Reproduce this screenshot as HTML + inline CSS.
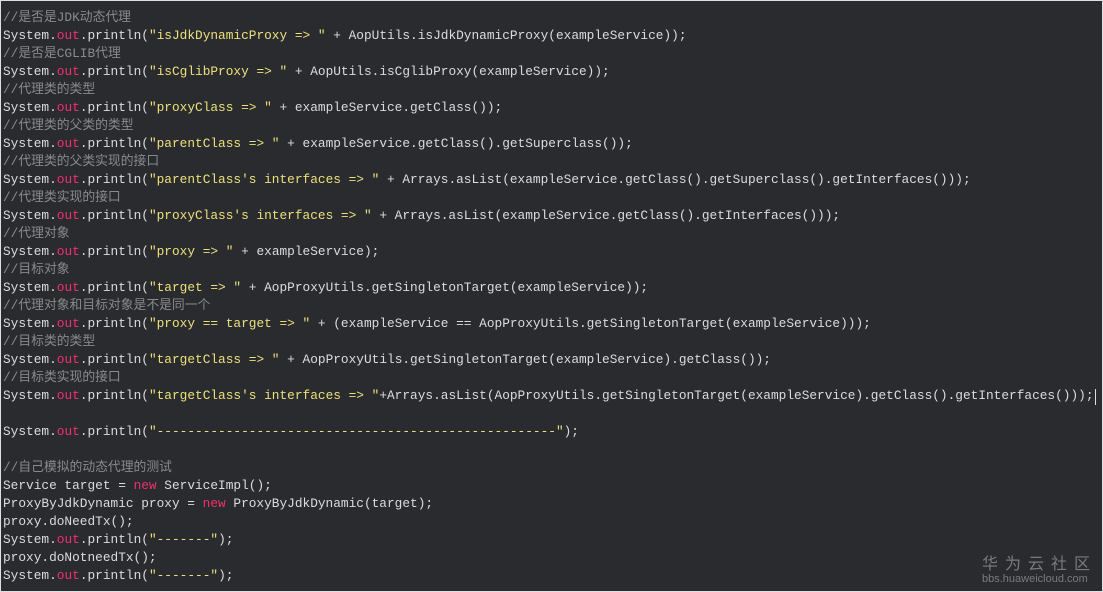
<!DOCTYPE html>
<html><head><meta charset="utf-8"><style>
html,body{margin:0;padding:0;}
body{width:1103px;height:592px;background:#fff;overflow:hidden;}
#c{position:absolute;left:0;top:0;width:1101px;height:590px;background:#2a2b2f;border:1px solid #e0e0e0;}
pre{margin:0;position:absolute;left:2px;top:8px;font-family:"Liberation Mono","Noto Sans CJK SC",monospace;font-size:12.8px;line-height:18px;color:#dcdcdc;}
.c{color:#8a8a8a;}
.s{color:#ece07a;}
.o{color:#f0306a;}
.k{color:#f0306a;}
#wm{position:absolute;left:981px;top:551px;color:#7a7b7e;font-family:"Noto Sans CJK SC",sans-serif;}
#wm .a{font-size:16px;letter-spacing:7px;line-height:20px;}
#wm .b{font-size:11px;font-family:"Liberation Sans",sans-serif;line-height:14px;}
#cur{position:absolute;left:1094px;top:388px;width:1px;height:16px;background:#ddd;}
</style></head><body><div id="c">
<pre><span class="c">//是否是JDK动态代理</span>
System.<span class="o">out</span>.println(<span class="s">"isJdkDynamicProxy =&gt; "</span> + AopUtils.isJdkDynamicProxy(exampleService));
<span class="c">//是否是CGLIB代理</span>
System.<span class="o">out</span>.println(<span class="s">"isCglibProxy =&gt; "</span> + AopUtils.isCglibProxy(exampleService));
<span class="c">//代理类的类型</span>
System.<span class="o">out</span>.println(<span class="s">"proxyClass =&gt; "</span> + exampleService.getClass());
<span class="c">//代理类的父类的类型</span>
System.<span class="o">out</span>.println(<span class="s">"parentClass =&gt; "</span> + exampleService.getClass().getSuperclass());
<span class="c">//代理类的父类实现的接口</span>
System.<span class="o">out</span>.println(<span class="s">"parentClass's interfaces =&gt; "</span> + Arrays.asList(exampleService.getClass().getSuperclass().getInterfaces()));
<span class="c">//代理类实现的接口</span>
System.<span class="o">out</span>.println(<span class="s">"proxyClass's interfaces =&gt; "</span> + Arrays.asList(exampleService.getClass().getInterfaces()));
<span class="c">//代理对象</span>
System.<span class="o">out</span>.println(<span class="s">"proxy =&gt; "</span> + exampleService);
<span class="c">//目标对象</span>
System.<span class="o">out</span>.println(<span class="s">"target =&gt; "</span> + AopProxyUtils.getSingletonTarget(exampleService));
<span class="c">//代理对象和目标对象是不是同一个</span>
System.<span class="o">out</span>.println(<span class="s">"proxy == target =&gt; "</span> + (exampleService == AopProxyUtils.getSingletonTarget(exampleService)));
<span class="c">//目标类的类型</span>
System.<span class="o">out</span>.println(<span class="s">"targetClass =&gt; "</span> + AopProxyUtils.getSingletonTarget(exampleService).getClass());
<span class="c">//目标类实现的接口</span>
System.<span class="o">out</span>.println(<span class="s">"targetClass's interfaces =&gt; "</span>+Arrays.asList(AopProxyUtils.getSingletonTarget(exampleService).getClass().getInterfaces()));

System.<span class="o">out</span>.println(<span class="s">"----------------------------------------------------"</span>);

<span class="c">//自己模拟的动态代理的测试</span>
Service target = <span class="k">new</span> ServiceImpl();
ProxyByJdkDynamic proxy = <span class="k">new</span> ProxyByJdkDynamic(target);
proxy.doNeedTx();
System.<span class="o">out</span>.println(<span class="s">"-------"</span>);
proxy.doNotneedTx();
System.<span class="o">out</span>.println(<span class="s">"-------"</span>);</pre>
<div id="cur"></div>
<div id="wm"><div class="a">华为云社区</div><div class="b">bbs.huaweicloud.com</div></div>
</div></body></html>
